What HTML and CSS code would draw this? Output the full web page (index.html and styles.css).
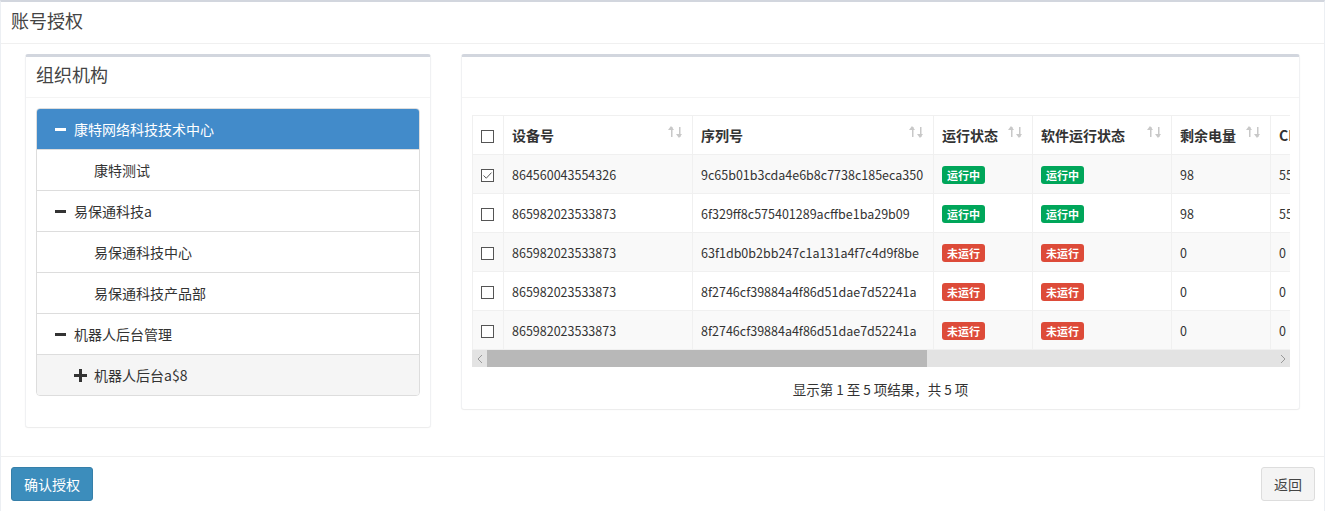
FILE: index.html
```html
<!DOCTYPE html>
<html lang="zh">
<head>
<meta charset="utf-8">
<title>账号授权</title>
<link rel="stylesheet" href="styles.css">
</head>
<body>
<div class="page">
  <div class="page-header"><h1 class="page-title">账号授权</h1></div>
  <div class="page-body">
    <div class="box box-org">
      <div class="box-header"><h3 class="box-title">组织机构</h3></div>
      <div class="box-body">
        <ul class="tree">
          <li class="node selected"><span class="ico minus"></span>康特网络科技技术中心</li>
          <li class="node lvl1"><span class="ico"></span>康特测试</li>
          <li class="node"><span class="ico minus"></span>易保通科技a</li>
          <li class="node lvl1"><span class="ico"></span>易保通科技中心</li>
          <li class="node lvl1"><span class="ico"></span>易保通科技产品部</li>
          <li class="node"><span class="ico minus"></span>机器人后台管理</li>
          <li class="node lvl1 hover"><span class="ico plus"></span>机器人后台a$8</li>
        </ul>
      </div>
    </div>
    <div class="box box-dev">
      <div class="box-header"><h3 class="box-title">&nbsp;</h3></div>
      <div class="box-body">
        <div class="table-wrap">
          <div class="table-clip">
            <table class="grid">
              <colgroup>
                <col class="c-cb"><col class="c-dev"><col class="c-sn"><col class="c-run"><col class="c-soft"><col class="c-bat"><col class="c-cpu">
              </colgroup>
              <thead>
                <tr>
                  <th><span class="cb"></span></th>
                  <th><div class="th-in">设备号<span class="sort"></span></div></th>
                  <th><div class="th-in">序列号<span class="sort"></span></div></th>
                  <th><div class="th-in">运行状态<span class="sort"></span></div></th>
                  <th><div class="th-in">软件运行状态<span class="sort"></span></div></th>
                  <th><div class="th-in">剩余电量<span class="sort"></span></div></th>
                  <th><div class="th-in">CPU使用率<span class="sort"></span></div></th>
                </tr>
              </thead>
              <tbody>
                <tr>
                  <td><span class="cb checked"><svg viewBox="0 0 13 13" width="13" height="13"><path d="M2.5 6.5 L5.3 9.2 L10.5 3.6" fill="none" stroke="#555" stroke-width="1"/></svg></span></td>
                  <td>864560043554326</td>
                  <td>9c65b01b3cda4e6b8c7738c185eca350</td>
                  <td><span class="label ok">运行中</span></td>
                  <td><span class="label ok">运行中</span></td>
                  <td>98</td>
                  <td>55</td>
                </tr>
                <tr>
                  <td><span class="cb"></span></td>
                  <td>865982023533873</td>
                  <td>6f329ff8c575401289acffbe1ba29b09</td>
                  <td><span class="label ok">运行中</span></td>
                  <td><span class="label ok">运行中</span></td>
                  <td>98</td>
                  <td>55</td>
                </tr>
                <tr>
                  <td><span class="cb"></span></td>
                  <td>865982023533873</td>
                  <td>63f1db0b2bb247c1a131a4f7c4d9f8be</td>
                  <td><span class="label off">未运行</span></td>
                  <td><span class="label off">未运行</span></td>
                  <td>0</td>
                  <td>0</td>
                </tr>
                <tr>
                  <td><span class="cb"></span></td>
                  <td>865982023533873</td>
                  <td>8f2746cf39884a4f86d51dae7d52241a</td>
                  <td><span class="label off">未运行</span></td>
                  <td><span class="label off">未运行</span></td>
                  <td>0</td>
                  <td>0</td>
                </tr>
                <tr>
                  <td><span class="cb"></span></td>
                  <td>865982023533873</td>
                  <td>8f2746cf39884a4f86d51dae7d52241a</td>
                  <td><span class="label off">未运行</span></td>
                  <td><span class="label off">未运行</span></td>
                  <td>0</td>
                  <td>0</td>
                </tr>
              </tbody>
            </table>
          </div>
          <div class="hscroll">
            <span class="arrow left"><svg viewBox="0 0 8 10" width="8" height="10"><path d="M6 1 L2 5 L6 9" fill="none" stroke="#999" stroke-width="1"/></svg></span>
            <span class="track"><span class="thumb"></span></span>
            <span class="arrow right"><svg viewBox="0 0 8 10" width="8" height="10"><path d="M2 1 L6 5 L2 9" fill="none" stroke="#999" stroke-width="1"/></svg></span>
          </div>
        </div>
        <div class="info">显示第 1 至 5 项结果，共 5 项</div>
      </div>
    </div>
  </div>
  <div class="page-footer">
    <button class="btn btn-primary">确认授权</button>
    <button class="btn btn-default">返回</button>
  </div>
</div>
</body>
</html>
```

FILE: styles.css
```css
* { box-sizing: border-box; }
html, body { margin: 0; padding: 0; background: #fff; }
body {
  font-family: "Noto Sans CJK SC", "Noto Sans", sans-serif;
  font-size: 14px;
  color: #333;
  width: 1325px;
  height: 511px;
  overflow: hidden;
}
.page {
  border-top: 2px solid #d2d6de;
  border-left: 1px solid #eceff3;
  border-right: 1px solid #eceff3;
  height: 511px;
}
.page-header {
  height: 42px;
  padding: 7px 10px 0;
  border-bottom: 1px solid #f0f0f0;
}
.page-title {
  margin: 0;
  font-size: 18px;
  font-weight: 400;
  line-height: 22px;
  color: #444;
}
.page-body {
  display: grid;
  grid-template-columns: 406px 839px;
  column-gap: 30px;
  align-items: start;
  padding: 10px 24px 9px;
}
.box {
  background: #fff;
  border-top: 3px solid #d2d6de;
  border-radius: 3px;
  border-left: 1px solid #f0f1f3;
  border-right: 1px solid #f0f1f3;
  box-shadow: 0 1px 1px rgba(0,0,0,0.08);
}
.box-header {
  height: 41px;
  padding: 5px 10px 0;
  border-bottom: 1px solid #f4f4f4;
}
.box-title {
  margin: 0;
  font-size: 18px;
  font-weight: 400;
  line-height: 24px;
  color: #444;
}
.box-org { margin-bottom: 20px; }
.box-org .box-body { padding: 10px 10px 31px; }
.tree {
  list-style: none;
  margin: 0;
  padding: 0;
  border: 1px solid #ddd;
  border-radius: 4px;
  overflow: hidden;
}
.node {
  height: 41px;
  line-height: 40px;
  padding-left: 17px;
  border-top: 1px solid #ddd;
  display: flex;
  align-items: center;
  color: #333;
}
.node:first-child { border-top: none; height: 40px; }
.node.lvl1 { padding-left: 37px; }
.node.selected { background: #428bca; color: #fff; }
.node.hover { background: #f5f5f5; }
.ico {
  width: 13px;
  height: 13px;
  margin-right: 7px;
  position: relative;
  flex: none;
}
.ico.minus::before {
  content: "";
  position: absolute;
  left: 1px; top: 5px;
  width: 11px; height: 3px;
  background: #333;
}
.node.selected .ico.minus::before { background: #fff; }
.ico.plus::before, .ico.plus::after {
  content: "";
  position: absolute;
  background: #333;
}
.ico.plus::before { left: 0; top: 5px; width: 13px; height: 3px; }
.ico.plus::after { left: 5px; top: 0; width: 3px; height: 13px; }

.box-dev .box-body { padding: 17px 10px 10px; }
.table-wrap { width: 818px; }
.table-clip { width: 818px; overflow: hidden; }
.grid {
  border-collapse: collapse;
  table-layout: fixed;
  width: 908px;
}
.c-cb { width: 31px; }
.c-dev { width: 189px; }
.c-sn { width: 241px; }
.c-run { width: 99px; }
.c-soft { width: 139px; }
.c-bat { width: 99px; }
.c-cpu { width: 110px; }
.grid th, .grid td {
  border: 1px solid #f0f0f0;
  padding: 0 8px;
  height: 39px;
  text-align: left;
  white-space: nowrap;
  overflow: hidden;
  font-size: 12.5px;
}
.grid th {
  font-weight: 700;
  font-size: 14px;
  height: 39px;
}
.grid tr > :first-child { padding: 0 0 0 8px; }
.grid tbody tr:nth-child(odd) { background: #f9f9f9; }
.th-in {
  display: flex;
  justify-content: space-between;
  align-items: center;
}
.sort {
  width: 16px;
  height: 12px;
  margin-top: -6px;
  flex: none;
  background:
    linear-gradient(#c8c8c8, #c8c8c8) 3px 1px / 1.5px 10px no-repeat,
    linear-gradient(#c8c8c8, #c8c8c8) 11px 1px / 1.5px 10px no-repeat;
  position: relative;
}
.sort::before, .sort::after {
  content: "";
  position: absolute;
  width: 0; height: 0;
  border-left: 3.5px solid transparent;
  border-right: 3.5px solid transparent;
}
.sort::before { left: 0.2px; top: 0; border-bottom: 4px solid #c8c8c8; }
.sort::after { left: 8.2px; bottom: 0; border-top: 4px solid #c8c8c8; }
.cb {
  display: inline-block;
  width: 13px;
  height: 13px;
  border: 1px solid #555;
  vertical-align: middle;
  position: relative;
  top: -1px;
  background: #fff;
}
.cb.checked svg { position: absolute; left: -1px; top: -1px; }
.label {
  display: inline-block;
  font-size: 11px;
  font-weight: 700;
  line-height: 12px;
  padding: 3px 5px;
  border-radius: 3px;
  color: #fff;
  vertical-align: middle;
}
.label.ok { background: #00a65a; }
.label.off { background: #dd4b39; }
.hscroll {
  display: flex;
  height: 17px;
  background: #e3e3e3;
  align-items: stretch;
}
.arrow {
  width: 15px;
  display: flex;
  align-items: center;
  justify-content: center;
  flex: none;
}
.track { flex: 1; position: relative; }
.thumb {
  position: absolute;
  left: 0; top: 0; bottom: 0;
  width: 440px;
  background: #b8b8b8;
}
.info {
  text-align: center;
  margin-top: 12px;
  line-height: 20px;
  font-size: 13.5px;
  color: #333;
}
.page-footer {
  display: flex;
  justify-content: space-between;
  border-top: 1px solid #f0f0f0;
  padding: 10px 9px 0 10px;
  margin-top: 0;
}
.btn {
  font-family: inherit;
  font-size: 14px;
  height: 34px;
  padding: 0 12px;
  border-radius: 3px;
  border: 1px solid transparent;
  cursor: pointer;
}
.btn-primary { background: #3c8dbc; border-color: #367fa9; color: #fff; }
.btn-default { background: #f4f4f4; border-color: #ddd; color: #444; }
```
